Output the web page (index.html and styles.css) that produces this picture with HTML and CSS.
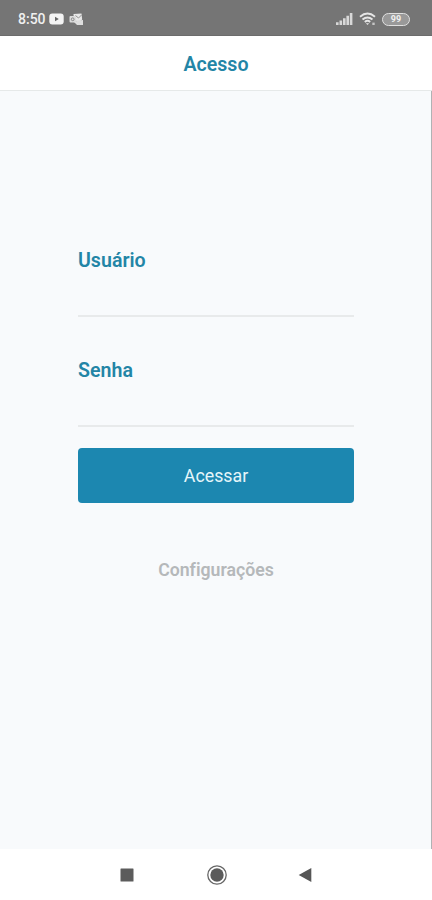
FILE: index.html
```html
<!DOCTYPE html>
<html lang="pt-BR">
<head>
<meta charset="utf-8">
<meta name="viewport" content="width=device-width, initial-scale=1">
<title>Acesso</title>
<link rel="stylesheet" href="styles.css">
</head>
<body>
<div class="status">
  <span class="clock">8:50</span>
  <svg class="video" width="15" height="12" viewBox="0 0 15 12"><rect x="0.3" y="0.5" width="14.4" height="11" rx="3" fill="#f4f4f4"/><path d="M6 3.7v4.6L9.800 6z" fill="#686868"/></svg>
  <svg class="mail" width="15" height="13" viewBox="0 0 15 13"><path d="M4.500 1l8-.5.7 6L10 9 5 7z" fill="#e8e8e8"/><path d="M6.500 2.500L9.500 5l3-3" fill="none" stroke="#909090"/><rect x="0.500" y="3" width="6.500" height="6.500" rx="1" fill="#dcdcdc"/><circle cx="3.700" cy="6.300" r="1.400" fill="none" stroke="#888"/><path d="M5 9l4-1.500L14 7v5H8z" fill="#dedede"/></svg>
  <svg class="signal" width="17" height="12" viewBox="0 0 17 12" fill="#d8d8d8"><path d="M0 9.300h2.600V12H0zM3.500 7.500h2.600V12H3.500zM7 5.300h2.600V12H7zM10.400 2.800H13V12h-2.600zM13.800 0h2.600v12h-2.600z"/></svg>
  <svg class="wifi" width="18" height="14" viewBox="0 0 18 14" fill="none" stroke="#e6e6e6" stroke-width="1.900"><path d="M1 4.700Q8.500-1.500 16 4.700M3.500 7.500Q8.500 3.300 13.500 7.500M5.800 10Q8.500 7.700 11.200 10"/><path d="M6.900 11.200h3.200L8.500 13z" fill="#e6e6e6" stroke="none"/><path d="M13.300 10.600h2.400v2.400h-2.400z" fill="#c6c6c6" stroke="none"/></svg>
  <span class="battery">99</span>
</div>
<header class="bar"><h1>Acesso</h1></header>
<main class="content">
  <form class="login">
    <label class="field">Usuário<input type="text"></label>
    <label class="field">Senha<input type="password"></label>
    <button type="button">Acessar</button>
    <a class="settings">Configurações</a>
  </form>
</main>
<nav class="nav">
  <svg width="14" height="14" viewBox="0 0 14 14"><rect x="0.500" y="0.500" width="13" height="13" rx="0.500" fill="#5c5c5c"/></svg>
  <svg width="20" height="20" viewBox="0 0 20 20"><circle cx="10" cy="10" r="9.200" fill="none" stroke="#666" stroke-width="1.300"/><circle cx="10" cy="10" r="6.700" fill="#5b5b5b"/></svg>
  <svg width="14" height="16" viewBox="0 0 14 16"><path d="M0.700 8L13.300 1v14z" fill="#565656"/></svg>
</nav>
</body>
</html>
```
FILE: styles.css
```css
* { box-sizing: border-box; }
body {
  margin: 0;
  width: 432px;
  height: 900px;
  overflow: hidden;
  display: flex;
  flex-direction: column;
  font-family: Roboto, sans-serif;
  background: #fff;
}
svg { display: block; flex: none; }
.status {
  height: 36px;
  flex: none;
  display: flex;
  align-items: center;
  padding: 3px 22px 0 18px;
  background: #757575;
  border-bottom: 1px solid #6c6c6c;
  color: #f0f0f0;
}
.clock { width: 31px; font-size: 14px; font-weight: 500; line-height: 16px; white-space: nowrap; }
.mail { margin-left: 5px; }
.signal { margin-left: auto; }
.wifi { margin-left: 6px; }
.battery {
  width: 28px;
  height: 13px;
  margin-left: 5px;
  border: 1.500px solid #e0e0e0;
  border-radius: 7px;
  background: #999;
  font-size: 9px;
  font-weight: 700;
  line-height: 11px;
  text-align: center;
}
.bar {
  height: 55px;
  flex: none;
  display: flex;
  align-items: center;
  justify-content: center;
  padding-top: 3px;
  border-bottom: 1px solid #e6e9e9;
}
.bar h1 { margin: 0; font-size: 19.600px; font-weight: 600; line-height: 24px; color: #2385a6; }
.content {
  height: 758px;
  flex: none;
  padding: 158px 77px 0 78px;
  background: #f8fafc;
  border-right: 1px solid #b0b2b4;
}
.login { display: flex; flex-direction: column; }
.field {
  display: flex;
  flex-direction: column;
  height: 110px;
  font-size: 19.600px;
  font-weight: 600;
  line-height: 24px;
  color: #2385a6;
}
.field input {
  width: 100%;
  height: 44px;
  padding: 0;
  border: 0;
  border-bottom: 2px solid #e8eaeb;
  background: transparent;
  outline: 0;
}
button {
  height: 55px;
  margin-top: -21px;
  padding: 0;
  border: 0;
  border-radius: 4px;
  background: #1c87b0;
  color: #e6f6fa;
  font: 400 17.800px/24px Roboto, sans-serif;
}
.settings {
  margin-top: 55px;
  text-align: center;
  color: #b5b8ba;
  font-size: 17.700px;
  font-weight: 600;
  line-height: 24px;
  font-variant-ligatures: none;
}
.nav {
  flex: 1;
  display: flex;
  align-items: center;
  padding-left: 120px;
  gap: 73px;
}
.nav svg:last-child { margin-left: -2px; }
```
